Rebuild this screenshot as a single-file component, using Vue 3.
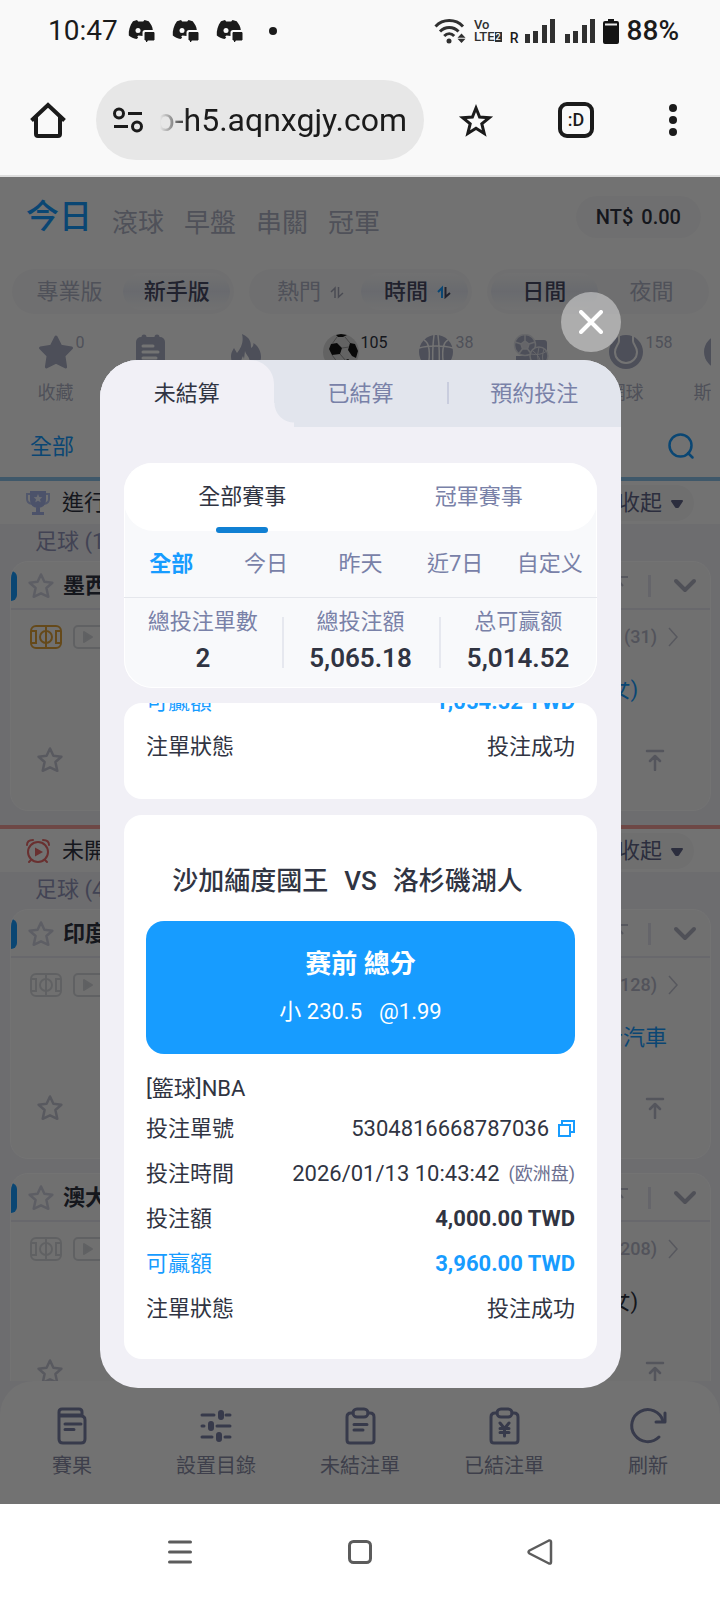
<script setup>
import { ref } from 'vue'

const url = ref('o-h5.aqnxgjy.com')
const categories = ['滾球', '早盤', '串關', '冠軍']
const sports = [
  { icon: 'star', count: '0', label: '收藏' },
  { icon: 'note' },
  { icon: 'fire' },
  { icon: 'soccer', count: '105', active: true },
  { icon: 'basket', count: '38' },
  { icon: 'mix' },
  { icon: 'tennis', count: '158', label: '網球' },
  { icon: 'snooker', label: '斯諾克' },
]
const sections = [
  {
    kind: 'live', title: '進行中', league: '足球 (1)',
    matches: [{ name: '墨西', live: true, count: '(31)', team: '(女)', blue: true }],
  },
  {
    kind: 'soon', title: '未開賽', league: '足球 (4)',
    matches: [
      { name: '印度', count: '(128)', team: '士汽車', blue: true },
      { name: '澳大', count: '(208)', team: '(女)' },
    ],
  },
]
const periods = ['全部', '今日', '昨天', '近7日', '自定义']
const totals = [
  { label: '總投注單數', value: '2' },
  { label: '總投注額', value: '5,065.18' },
  { label: '总可赢额', value: '5,014.52' },
]
const period = ref('全部')
const nav = [
  { icon: 'result', label: '賽果' },
  { icon: 'sliders', label: '設置目錄' },
  { icon: 'open', label: '未結注單' },
  { icon: 'settled', label: '已結注單' },
  { icon: 'refresh', label: '刷新' },
]
</script>

<template>
  <div class="phone" lang="zh-Hant">
    <header class="status">
      <span class="clock">10:47</span>
      <svg v-for="n in 3" :key="n" class="chat" width="28" height="24" viewBox="0 0 28 24">
        <path fill="#1b1b1b" d="M5 2.200 9 1l1.200 1.500h5L16.500 1l4.200 1.200C23 5 24.600 8 24.800 11H17c-1.500 0-2.500 1-2.500 2.500V17l-4-.4-1.300 1 1 1.200L8.500 20C5.600 19.500 3 18.300.8 16.600.4 11.500 1.800 6.500 5 2.200Z"/>
        <circle cx="10" cy="11.500" r="2.500" fill="#f9f9f9"/>
        <path fill="#1b1b1b" d="M17 13.500h9v7.500h-6.500L18.500 23v-2H17Z" stroke="#1b1b1b" stroke-linejoin="round"/>
      </svg>
      <svg class="dot" width="8" height="8"><circle cx="4" cy="4" r="4" fill="#1b1b1b"/></svg>
      <span class="grow"></span>
      <svg width="32" height="26" viewBox="0 0 32 26" fill="none" stroke="#303030" stroke-width="3">
        <path d="M1.500 8.500C9 .6 21.500.6 29 8.500M6 13.500c5.200-5.300 13.300-5.300 18.500 0M10.200 18c3-3 7-3 10 0"/>
        <circle cx="15" cy="23" r="2.500" fill="#303030" stroke="none"/>
        <path fill="#303030" stroke="none" d="m27.500 15.500 4 4.200h-8Zm0 9.500 4-4.200h-8Z"/>
      </svg>
      <span class="volte"><b>Vo</b><b>LTE<i>2</i></b></span>
      <span class="roam">R</span>
      <svg class="bars" width="30" height="24" fill="#303030"><path d="M0 15h5v9H0zM8 12h5v12H8zM17 6h5v18h-5zM25 0h5v24h-5z"/></svg>
      <svg class="bars" width="30" height="24" fill="#303030"><path d="M0 15h5v9H0zM8 12h5v12H8zM17 6h5v18h-5zM25 0h5v24h-5z"/></svg>
      <svg class="battery" width="16" height="25" fill="#141414"><path d="M5 0h6v2h3q2 0 2 2v19q0 2-2 2H2q-2 0-2-2V4q0-2 2-2h3z"/><path d="M2 4.500h12v2H2z" fill="#eee"/></svg>
      <span class="percent">88%</span>
    </header>

    <div class="toolbar">
      <button class="home" aria-label="Home">
        <svg width="36" height="36" viewBox="0 0 36 36" fill="none" stroke="#1b1b1b" stroke-width="4" stroke-linejoin="round"><path d="M6 15v17q0 2 2 2h20q2 0 2-2V15"/><path d="M1.500 18.500 18 3l16.500 15.500" stroke-linejoin="miter"/></svg>
      </button>
      <div class="address">
        <svg width="30" height="26" viewBox="0 0 30 26" fill="none" stroke="#1b1b1b" stroke-width="3"><circle cx="6" cy="6.500" r="4.500"/><circle cx="24" cy="19.500" r="4.500"/><path d="M15 6.500h14M1 19.500h14"/></svg>
        <div class="url"><input v-model="url" aria-label="Address" type="text" /></div>
      </div>
      <button class="tool wide" aria-label="Bookmark">
        <svg width="36" height="36" viewBox="0 0 36 36" fill="none" stroke="#1b1b1b" stroke-width="3"><path d="m18 6 3.600 9 9.700.7-7.500 6.200 2.400 9.500-8.200-5.200-8.200 5.200 2.400-9.500-7.500-6.200 9.700-.7Z"/></svg>
      </button>
      <button class="tool wide"><span class="tabs">:D</span></button>
      <button class="tool" aria-label="Menu">
        <svg width="8" height="32" fill="#1b1b1b"><circle cx="4" cy="4" r="4"/><circle cx="4" cy="16" r="4"/><circle cx="4" cy="28" r="4"/></svg>
      </button>
    </div>

    <main class="app">
      <div class="feed">
        <div class="masthead">
          <div class="top">
            <nav class="cats">
              <a href="#" class="current">今日</a>
              <a v-for="c in categories" :key="c" href="#">{{ c }}</a>
            </nav>
            <div class="balance"><span>NT$</span><span>0.00</span></div>
          </div>
          <div class="segments">
            <div class="segment"><button>專業版</button><button class="on">新手版</button></div>
            <div class="segment">
              <button class="sort">熱門
                <svg width="14" height="14" viewBox="0 0 14 14" fill="none" stroke="#a4a7b8" stroke-width="1.500"><path d="M1 7 5 3v10M8.500 2v10L13 8"/></svg>
              </button>
              <button class="sort on">時間
                <svg width="14" height="14" viewBox="0 0 14 14" fill="none" stroke-width="2"><path d="M1 7 5 3v10" stroke="#179cff"/><path d="M8.500 2v10L13 8" stroke="#4a4d66"/></svg>
              </button>
            </div>
            <div class="segment"><button class="on">日間</button><button>夜間</button></div>
          </div>
          <div class="sports">
            <button v-for="s in sports" :key="s.icon" class="sport" :class="{ active: s.active }">
              <span class="pic">
                <svg width="36" height="36" viewBox="0 0 36 36">
                  <path v-if="s.icon === 'star'" fill="#abafc6" stroke="#abafc6" stroke-width="3" stroke-linejoin="round" d="m18 3 4.700 9.200 10.800 1.800-7.600 7.700 1.700 11.200L18 28.200l-9.600 4.700 1.700-11.200L2.500 14l10.800-1.800Z"/>
                  <template v-else-if="s.icon === 'note'">
                    <rect x="3" y="3" width="29" height="31" rx="5" fill="#abafc6"/><path d="M11 3v3M24 3v3" stroke="#abafc6" stroke-width="5" stroke-linecap="round"/><path d="M10 12h10M10 18h15M10 24h13" stroke="#fff" stroke-width="3" stroke-linecap="round"/>
                  </template>
                  <template v-else-if="s.icon === 'fire'">
                    <path fill="#abafc6" d="M14 0c9 4 9 9 9 14 2-1 2.500-3 2.500-5C31 13 33 18 33 23c0 7-6 12-15 12S3 30 3 23c0-5 2-7 3-9l3 5C13 14 16 8 14 0Z"/><path fill="#fff" d="M17 17c1 4 5 6 5 12s-9 6-9 0c0-3 1-5 2-7l1 3Z"/>
                  </template>
                  <template v-else-if="s.icon === 'soccer'">
                    <circle cx="18" cy="18" r="18" fill="#dcdcdc"/><path d="m8 10 6-1 5 5-2 6-8 1-3-6ZM27 9l5 1 3 7-2 7-4-2-4-6ZM13 1l5-1 6 1-4 2h-5ZM16 29l9-4 5 4-6 5h-7Z" fill="#161616"/><path d="m19 14 7-1M17 20l6 7M9 21l6 8M9 10l5-7M27 9l-5-6" stroke="#999" fill="none"/>
                  </template>
                  <template v-else-if="s.icon === 'basket'">
                    <circle cx="18" cy="18" r="17" fill="#abafc6"/><path d="M16 1q-2 16-1 34M20 1q2 16 1 34M6 6q8 4 4 28M30 6q-8 4-4 28M1 14q7-2 17-2t17 2" stroke="#fff" stroke-width="1.500" fill="none"/>
                  </template>
                  <template v-else-if="s.icon === 'mix'">
                    <rect x="15" y="6" width="19" height="30" rx="3" fill="#abafc6"/><rect x="3" y="22" width="14" height="14" fill="#abafc6"/><circle cx="12" cy="11" r="10.500" fill="#abafc6" stroke="#e5e6ec" stroke-width="1.500"/><path d="m12 7 4 3-1.500 5h-5L8 10ZM12 1v6M16 10l6-2M8 10 2 8M14.500 15l4 5M9.500 15l-4 5" fill="#dfe0e8" stroke="#e5e6ec" stroke-width="1.500"/><circle cx="26" cy="22" r="9" fill="#abafc6" stroke="#e5e6ec" stroke-width="1.500"/><path d="M18 20q9 2 16-3M26 13q-3 8 0 18M20 17q8 6 8 14M31 15q-3 9 0 14" stroke="#e5e6ec" fill="none"/>
                  </template>
                  <template v-else-if="s.icon === 'tennis'">
                    <circle cx="18" cy="18" r="17" fill="#abafc6"/><path d="M11 1v6c0 3-4 6-4 11a11 11 0 0 0 22 0c0-5-4-8-4-11V1" stroke="#fff" stroke-width="2" fill="none"/>
                  </template>
                  <circle v-else cx="18" cy="18" r="17" fill="#abafc6"/>
                </svg>
                <span v-if="s.count" class="count">{{ s.count }}</span>
              </span>
              <span v-if="s.label" class="name">{{ s.label }}</span>
            </button>
          </div>
          <div class="leagues">
            <a href="#">全部</a>
            <button aria-label="搜尋">
              <svg width="27" height="27" viewBox="0 0 27 27" fill="none" stroke="#179cff" stroke-width="2.500" stroke-linecap="round"><circle cx="12.500" cy="12.500" r="11"/><path d="m20 20 4.500 4.500"/></svg>
            </button>
          </div>
        </div>

        <section v-for="s in sections" :key="s.kind">
          <div class="bar" :class="s.kind">
            <svg v-if="s.kind === 'live'" width="26" height="26" viewBox="0 0 26 26">
              <path fill="none" stroke="#b7c3f0" stroke-width="2" d="M5 4H2v5q0 4 5 5M21 4h3v5q0 4-5 5"/><path fill="#a9b7ec" d="M5 1h16v9q0 7-8 8-8-1-8-8ZM11 17h4v5h-4ZM7 22h12v3H7Z"/><path fill="#eef1ff" d="m13 4 1.300 3 3 .3-2.300 2 .7 3-2.700-1.600-2.700 1.600.7-3-2.300-2 3-.3Z"/>
            </svg>
            <svg v-else width="26" height="26" viewBox="0 0 26 26" fill="none" stroke="#e86a6a" stroke-width="2">
              <circle cx="13" cy="14" r="10"/><path d="M2 7q0-5 6-5M24 7q0-5-6-5M6 22l-2 2M20 22l2 2" stroke-linecap="round"/><path d="m10 9.500 8 4.500-8 4.500Z" fill="#e86a6a" stroke="none"/>
            </svg>
            <h2>{{ s.title }}</h2>
            <button class="fold">收起
              <svg width="14" height="16"><path d="M2 6h10l-4 6H6Z" fill="#62668a" stroke="#62668a" stroke-width="2" stroke-linejoin="round"/></svg>
            </button>
          </div>
          <div class="league">{{ s.league }}</div>
          <article v-for="m in s.matches" :key="m.name" class="match">
            <div class="head">
              <span class="flag"></span>
              <svg width="28" height="28" viewBox="0 0 28 28" fill="none" stroke="#cfd0de" stroke-width="2.500" stroke-linejoin="round"><path d="m14 2.500 3.400 7.300 8 .9-6 5.300 1.900 8.800-7.300-3.500-7.300 3.500L8.600 16l-6-5.300 8-.9Z"/></svg>
              <h3>{{ m.name }}</h3>
              <svg width="22" height="22" viewBox="0 0 22 22" fill="none" stroke="#c2c3d0" stroke-width="2"><path d="M2 2h19M11 20V6M6 10l5-5 5 6"/></svg>
              <span class="rule"></span>
              <svg width="24" height="16" viewBox="0 0 24 16" fill="none" stroke="#b0b1c2" stroke-width="4" stroke-linecap="round" stroke-linejoin="round"><path d="m3 3 9 9 9-9"/></svg>
            </div>
            <div class="line">
              <svg width="32" height="24" viewBox="0 0 32 24" fill="none" :stroke="m.live ? '#dfa33a' : '#d6d8db'" stroke-width="2"><rect x="1" y="1" width="30" height="22" rx="5"/><circle cx="16" cy="12" r="6"/><path d="M16 1v22M1 6h5v12H1M31 6h-5v12h5"/></svg>
              <svg width="32" height="24" viewBox="0 0 32 24" fill="none" stroke="#d6d8db" stroke-width="2"><rect x="1" y="1" width="30" height="22" rx="4"/><path d="m11 7 8 5-8 5Z" fill="#d2d6da" stroke-linejoin="round"/></svg>
              <span class="num">{{ m.count }}</span>
              <svg width="10" height="20" viewBox="0 0 10 20" fill="none" stroke="#c2c3d0" stroke-width="1.500"><path d="m1 1 8 9-8 9"/></svg>
            </div>
            <div class="team" :class="{ blue: m.blue }">{{ m.team }}</div>
            <div class="foot">
              <svg width="28" height="28" viewBox="0 0 28 28" fill="none" stroke="#c4c5d2" stroke-width="2.500" stroke-linejoin="round"><path d="m14 2.500 3.400 7.300 8 .9-6 5.300 1.900 8.800-7.300-3.500-7.300 3.500L8.600 16l-6-5.300 8-.9Z"/></svg>
              <svg width="20" height="22" viewBox="0 0 20 22" fill="none" stroke="#babccc" stroke-width="2.500" stroke-linecap="round" stroke-linejoin="round"><path d="M2 2h16M10 21V8M5 12l5-5 5 5"/></svg>
            </div>
          </article>
        </section>
      </div>

      <nav class="dock">
        <a v-for="n in nav" :key="n.icon" href="#">
          <svg width="40" height="40" viewBox="0 0 40 40" fill="none" stroke="#7b80a6" stroke-width="3" stroke-linecap="round" stroke-linejoin="round">
            <path v-if="n.icon === 'result'" d="M8 10h21q4 0 4 4v19q0 4-4 4H11q-4 0-4-4V6q0-3 3-3h17q3 0 3 3v4M7 9h22M13 18h16M13 23.500h9"/>
            <template v-else-if="n.icon === 'sliders'">
              <path d="M6 9h12M30 9h4M6 20h2M21 20h13M6 31h10M29 31h5"/><path d="M25 7v4M15 18v4M23 29v4" stroke-width="6"/>
            </template>
            <template v-else-if="n.icon === 'refresh'">
              <path d="M35 15A16 16 0 1 0 31 31"/><path d="M37 7v9h-9"/>
            </template>
            <template v-else>
              <path d="M13 7h-2q-4 0-4 4v23q0 3 3 3h21q3 0 3-3V11q0-4-4-4h-2"/><rect x="13" y="3" width="15" height="8" rx="4"/>
              <path v-if="n.icon === 'open'" d="M14 18.500h13M14 24h9"/>
              <path v-else d="m16 17 4.500 5.500L25 17M16 22.500h9M16 26.500h9M20.500 22.500V30"/>
            </template>
          </svg>
          <span>{{ n.label }}</span>
        </a>
      </nav>

      <div class="shade"></div>

      <div class="dialog" role="dialog" aria-label="注單">
        <button class="close" aria-label="關閉">
          <svg width="24" height="24" viewBox="0 0 24 24" stroke="#fff" stroke-width="4" stroke-linecap="round"><path d="m2 2 20 20M22 2 2 22"/></svg>
        </button>
        <div class="sheet">
          <div class="pages">
            <button class="on">未結算</button>
            <button>已結算</button>
            <button class="split">預約投注</button>
          </div>
          <div class="panel">
            <div class="kinds"><button class="on">全部賽事</button><button>冠軍賽事</button></div>
            <div class="periods">
              <button v-for="p in periods" :key="p" :class="{ on: p === period }" @click="period = p">{{ p }}</button>
            </div>
            <dl class="totals">
              <div v-for="t in totals" :key="t.label"><dt>{{ t.label }}</dt><dd>{{ t.value }}</dd></div>
            </dl>
          </div>

          <article class="slip scrolled">
            <dl>
              <div class="win"><dt>可贏額</dt><dd>1,054.52 TWD</dd></div>
              <div><dt>注單狀態</dt><dd>投注成功</dd></div>
            </dl>
          </article>

          <article class="slip">
            <h1><span>沙加緬度國王</span><span>VS</span><span>洛杉磯湖人</span></h1>
            <div class="pick">
              <strong>赛前 總分</strong>
              <p><span>小 230.5</span><span>@1.99</span></p>
            </div>
            <p class="event">[籃球]NBA</p>
            <dl>
              <div>
                <dt>投注單號</dt>
                <dd>5304816668787036
                  <button aria-label="複製"><svg width="17" height="17" viewBox="0 0 17 17" fill="none" stroke="#179cff" stroke-width="2"><path d="M1 5h11v11H1ZM4 5V1h12v11h-4"/></svg></button>
                </dd>
              </div>
              <div><dt>投注時間</dt><dd>2026/01/13 10:43:42 <small lang="zh-Hans">(欧洲盘)</small></dd></div>
              <div class="stake"><dt>投注額</dt><dd>4,000.00 TWD</dd></div>
              <div class="win"><dt>可贏額</dt><dd>3,960.00 TWD</dd></div>
              <div><dt>注單狀態</dt><dd>投注成功</dd></div>
            </dl>
          </article>
        </div>
      </div>
    </main>

    <footer class="system">
      <button aria-label="Recent apps"><svg width="24" height="24" stroke="#5c5c5c" stroke-width="3" stroke-linecap="round"><path d="M1.500 2h21M1.500 12h21M1.500 22h21"/></svg></button>
      <button aria-label="Home screen"><svg width="24" height="24" fill="none" stroke="#5c5c5c" stroke-width="3"><rect x="1.500" y="1.500" width="21" height="21" rx="4"/></svg></button>
      <button aria-label="Back"><svg width="26" height="26" fill="none" stroke="#5c5c5c" stroke-width="2.500" stroke-linejoin="round"><path d="M22 1.500q2-.5 2 1.500v20q0 2-2 1.500L2.500 14.500q-2-1.500 0-3Z"/></svg></button>
    </footer>
  </div>
</template>

<style>
body {
  background: #fff;
}
</style>

<style scoped>
* {
  box-sizing: border-box;
  margin: 0;
  padding: 0;
}
.phone {
  height: 100vh;
  display: flex;
  flex-direction: column;
  overflow: hidden;
  font-family: Roboto, "Noto Sans CJK TC", "Noto Sans CJK SC", sans-serif;
  font-size: 22px;
  line-height: 32px;
  color: #303442;
}
button,
input {
  font: inherit;
  color: inherit;
  background: none;
  border: 0;
}
a {
  color: inherit;
  text-decoration: none;
}
svg {
  display: block;
  flex: none;
}

/* Status bar */
.status {
  height: 62px;
  flex: none;
  display: flex;
  align-items: center;
  padding: 0 41px 0 48px;
  background: #f9f9f9;
  color: #1b1b1b;
  font-size: 28px;
}
.clock {
  margin-right: 10px;
}
.chat {
  margin-right: 16px;
}
.dot {
  margin-left: 9px;
}
.grow {
  flex: 1;
}
.volte {
  display: flex;
  flex-direction: column;
  margin-left: 8px;
  font-size: 13px;
  line-height: 12px;
  color: #303030;
}
.volte b {
  display: flex;
  align-items: center;
  font-weight: 500;
}
.volte i {
  background: #303030;
  color: #fff;
  font-style: normal;
  font-size: 9px;
  line-height: 10px;
  padding: 0 1px;
}
.roam {
  margin: 14px 6px 0 8px;
  font-size: 14px;
  line-height: 14px;
  font-weight: 500;
}
.bars + .bars {
  margin-left: 10px;
}
.battery {
  margin: 0 8px;
}
.percent {
  font-weight: 500;
}

/* Browser toolbar */
.toolbar {
  flex: none;
  display: flex;
  align-items: center;
  padding: 18px 0 15px 30px;
  background: #f9f9f9;
  border-bottom: 2px solid #dedede;
}
.home {
  margin-right: 30px;
}
.address {
  flex: 1;
  min-width: 0;
  height: 80px;
  display: flex;
  align-items: center;
  gap: 17px;
  padding: 0 17px;
  margin-right: 2px;
  border-radius: 40px;
  background: #e7e7e7;
}
.url {
  flex: 1;
  min-width: 0;
  display: flex;
  justify-content: flex-end;
  overflow: hidden;
  -webkit-mask-image: linear-gradient(90deg, transparent, #000 28px);
  mask-image: linear-gradient(90deg, transparent, #000 28px);
}
.url input {
  flex: none;
  width: 260px;
  height: 44px;
  font-size: 32px;
  text-align: right;
  color: #1b1b1b;
  outline: 0;
}
.tool {
  width: 94px;
  display: flex;
  justify-content: center;
}
.tool.wide {
  width: 100px;
}
.tabs {
  width: 36px;
  height: 36px;
  border: 4px solid #1b1b1b;
  border-radius: 9px;
  font-size: 18px;
  line-height: 28px;
  font-weight: 500;
  color: #1b1b1b;
}

/* Betting page */
.app {
  flex: 1;
  min-height: 0;
  position: relative;
  display: flex;
  flex-direction: column;
  background: #f1f1f6;
}
.feed {
  flex: 1;
  min-height: 0;
  overflow: hidden;
}
.masthead {
  background: #fdfdfd;
}
.top {
  height: 80px;
  display: flex;
  align-items: center;
  justify-content: space-between;
  padding: 0 19px 0 26px;
}
.cats {
  display: flex;
  align-items: flex-end;
  gap: 20px;
  font-size: 26px;
  line-height: 24px;
  color: #b0b3c6;
}
.cats .current {
  font-size: 33px;
  line-height: 36px;
  font-weight: 500;
  color: #179cff;
}
.balance {
  display: flex;
  align-items: center;
  gap: 8px;
  height: 42px;
  padding: 0 20px;
  border-radius: 21px;
  background: #f7f7f8;
  font-size: 20px;
  font-weight: 500;
}
.segments {
  display: flex;
  gap: 15px;
  padding: 12px 11px 0 12px;
}
.segment {
  flex: 1;
  display: flex;
  height: 45px;
  padding: 4px;
  border-radius: 23px;
  background: #f7f7f8;
}
.segment button {
  flex: 1;
  display: flex;
  align-items: center;
  justify-content: center;
  gap: 9px;
  border-radius: 19px;
  color: #b0b3c6;
}
.segment .sort {
  padding-left: 7px;
}
.segment .on {
  background: linear-gradient(#fafafb, #e9ecf4 50%, #fafafb);
  color: #4a4d66;
  font-weight: 500;
}
.sports {
  display: flex;
  margin: 12px 9px 0 8px;
  padding-top: 8px;
  overflow: hidden;
}
.sport {
  flex: 0 0 95px;
  display: flex;
  flex-direction: column;
  align-items: center;
  gap: 11px;
  font-size: 18px;
  line-height: 24px;
  color: #b0b3c6;
}
.pic {
  position: relative;
}
.count {
  position: absolute;
  left: 38px;
  top: 0;
  font-size: 16px;
  line-height: 18px;
}
.active .count {
  color: #303442;
}
.name {
  white-space: nowrap;
}
.leagues {
  display: flex;
  align-items: center;
  justify-content: space-between;
  height: 61px;
  margin-top: 11px;
  padding: 0 25px 0 30px;
  color: #179cff;
}
.bar {
  display: flex;
  align-items: center;
  gap: 11px;
  height: 47px;
  padding: 0 26px 0 25px;
  border-top: 4px solid #8cc4ec;
  background: #fdfdfd;
}
.bar.soon {
  border-color: #f3a09c;
}
.bar h2 {
  flex: 1;
  font-size: 22px;
  font-weight: 400;
}
.fold {
  display: flex;
  align-items: center;
  gap: 8px;
  height: 36px;
  padding: 0 10px 0 20px;
  border-radius: 18px;
  background: #f6f6f7;
  color: #62668a;
}
.league {
  height: 37px;
  padding-left: 35px;
  line-height: 35px;
  color: #9396bb;
}
.match {
  height: 250px;
  margin: 0 9px 14px 10px;
  border: 1px solid #fff;
  border-radius: 18px;
  background: #f8f8f9;
  overflow: hidden;
}
.head {
  display: flex;
  align-items: center;
  height: 48px;
  padding: 1px 13px 0 0;
  border-bottom: 2px solid #e6e6ef;
}
.flag {
  width: 6px;
  height: 30px;
  margin-right: 10px;
  border-radius: 0 8px 8px 0;
  background: #179cff;
}
.head h3 {
  flex: 1;
  margin-left: 8px;
  font-size: 22px;
  font-weight: 700;
  color: #303442;
}
.rule {
  width: 3px;
  height: 22px;
  margin: 0 22px 0 19px;
  background: #dfe0ea;
}
.line {
  display: flex;
  align-items: center;
  gap: 11px;
  height: 24px;
  margin-top: 15px;
  padding: 0 32px 0 19px;
}
.num {
  flex: 1;
  text-align: right;
  font-size: 18px;
  font-weight: 500;
  color: #b7b9c9;
}
.team {
  width: 109px;
  margin: 24px 0 0 auto;
  line-height: 34px;
}
.team.blue {
  color: #179cff;
}
.foot {
  display: flex;
  align-items: center;
  justify-content: space-between;
  height: 28px;
  margin-top: 39px;
  padding: 0 45px 0 25px;
}
.dock {
  flex: none;
  display: grid;
  grid-template-columns: repeat(5, 1fr);
  height: 123px;
  padding-top: 25px;
  border-radius: 34px 34px 0 0;
  background: #fdfdfd;
  font-size: 20px;
  line-height: 30px;
  color: #8a8da6;
}
.dock a {
  display: flex;
  flex-direction: column;
  align-items: center;
  gap: 5px;
}
.shade {
  position: absolute;
  inset: 0;
  background: rgba(0, 0, 0, 0.55);
}

/* Bet slip dialog */
.dialog {
  position: absolute;
  top: 115px;
  left: 100px;
  right: 99px;
}
.close {
  display: flex;
  align-items: center;
  justify-content: center;
  width: 60px;
  height: 60px;
  margin: 0 0 8px auto;
  border-radius: 50%;
  background: rgba(255, 255, 255, 0.42);
}
.sheet {
  padding-bottom: 29px;
  border-radius: 38px;
  overflow: hidden;
  background: #f1f0f6;
}
.pages {
  display: grid;
  grid-template-columns: repeat(3, 1fr);
  height: 67px;
  background: #e2e5ed;
}
.pages button {
  position: relative;
  color: #7981a8;
}
.pages .on {
  border-top-right-radius: 24px;
  background: #f1f0f6;
  color: #303442;
}
.pages .on::after {
  content: "";
  position: absolute;
  left: 100%;
  bottom: 0;
  width: 20px;
  height: 24px;
  background: radial-gradient(circle at 100% 0, transparent 19px, #f1f0f6 20px);
}
.split::before {
  content: "";
  position: absolute;
  left: 0;
  top: 22px;
  width: 2px;
  height: 22px;
  background: #c9cdde;
}
.panel {
  margin: 36px 24px 15px;
  border-radius: 28px;
  background: #f8f9fb;
  box-shadow: inset 0 0 0 1px #fff;
}
.kinds {
  display: grid;
  grid-template-columns: 1fr 1fr;
  height: 68px;
  border-radius: 30px;
  background: #fff;
  color: #7981a8;
}
.kinds .on {
  position: relative;
  color: #303442;
}
.kinds .on::after {
  content: "";
  position: absolute;
  left: 50%;
  bottom: -2px;
  width: 52px;
  height: 6px;
  margin-left: -26px;
  border-radius: 3px;
  background: #1080d3;
}
.periods {
  display: grid;
  grid-template-columns: repeat(5, 1fr);
  height: 67px;
  border-bottom: 1px solid #e5e7ec;
  color: #7981a8;
}
.periods .on {
  font-weight: 700;
  color: #179cff;
}
.totals {
  display: grid;
  grid-template-columns: repeat(3, 1fr);
  padding: 8px 0 10px;
  text-align: center;
}
.totals div {
  position: relative;
}
.totals div + div::before {
  content: "";
  position: absolute;
  left: 0;
  top: 11px;
  width: 2px;
  height: 51px;
  background: #e6e8ef;
}
.totals dt {
  color: #7981a8;
}
.totals dd {
  font-size: 26px;
  line-height: 40px;
  font-weight: 600;
}
.slip {
  margin: 0 24px;
  padding: 46px 22px 28px;
  border-radius: 18px;
  background: #fff;
}
.slip.scrolled {
  margin-bottom: 16px;
  padding: 0 22px 30px;
  overflow: hidden;
}
.slip.scrolled dl {
  margin-top: -24px;
}
.slip h1 {
  display: grid;
  grid-template-columns: 1fr auto 1fr;
  gap: 16px;
  font-size: 26px;
  line-height: 40px;
  font-weight: 500;
  white-space: nowrap;
}
.slip h1 span:first-child {
  text-align: right;
}
.pick {
  margin-top: 20px;
  padding: 26px 0 26px;
  border-radius: 18px;
  background: #179cff;
  color: #fff;
  text-align: center;
}
.pick strong {
  display: block;
  font-size: 26px;
  line-height: 34px;
  font-weight: 700;
}
.pick p {
  display: flex;
  justify-content: center;
  gap: 17px;
  margin-top: 15px;
}
.event {
  margin-top: 17px;
  line-height: 35px;
}
.slip dl div {
  display: flex;
  align-items: center;
  justify-content: space-between;
  height: 45px;
}
.slip dd {
  display: flex;
  align-items: center;
  gap: 9px;
}
.slip small {
  font-size: 18px;
  color: #6c7090;
}
.stake dd,
.win dd {
  font-weight: 700;
}
.win {
  color: #179cff;
}

/* System navigation */
.system {
  flex: none;
  display: flex;
  align-items: center;
  justify-content: center;
  height: 96px;
  background: #fff;
}
.system button {
  display: flex;
  justify-content: center;
  width: 25%;
}
</style>
